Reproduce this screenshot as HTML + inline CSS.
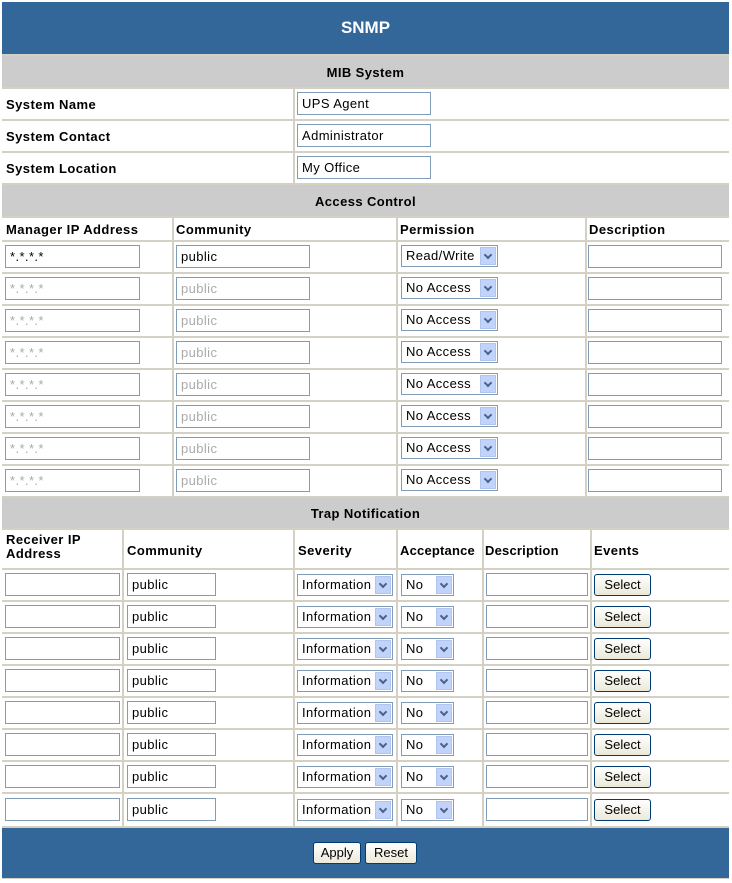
<!DOCTYPE html>
<html><head><meta charset="utf-8"><style>
*{margin:0;padding:0;box-sizing:border-box}
body{width:732px;height:883px;background:#fff;position:relative;font-family:"Liberation Sans",Arial,sans-serif;overflow:hidden}
#w{position:absolute;left:2px;top:2px;width:727px;height:877px;background:#d4d0c4}
.a{position:absolute}
.blue{background:#336699;color:#fff}
.gray{background:#cccccc;font-weight:bold;font-size:13px;letter-spacing:0.4px;text-align:center;color:#000}
.row{position:absolute;left:0;width:727px;background:#fff}
.v{position:absolute;width:2px;background:#d4d0c4}
.lb{position:absolute;font-weight:bold;font-size:13px;letter-spacing:0.45px;color:#000}
.in{position:absolute;height:23px;border:1px solid #7f9db9;background:#fff;font-size:13px;letter-spacing:0.4px;line-height:22px;padding-left:4px;color:#000;white-space:nowrap}
.g{color:#aaa}
.sel{position:absolute;height:22px;border:1px solid #7f9db9;background:#fff;font-size:13px;letter-spacing:0.4px;line-height:20px;padding-left:4px;white-space:nowrap}
.sel i{position:absolute;right:1px;top:1px;width:16px;height:18px;background:#c1d3fb;border:1px solid #b0c4f0}
.sel i:after{content:"";position:absolute;left:4px;top:4px;width:4px;height:4px;border-right:2px solid #4d6185;border-bottom:2px solid #4d6185;transform:rotate(45deg)}
.btn{position:absolute;height:22px;border:1px solid #003c74;border-radius:3px;background:linear-gradient(#fff,#ece9d8);font-size:13px;line-height:20px;text-align:center;color:#000}
</style></head><body>
<div id="w">
<div class="a blue" style="left:0;top:0;width:727px;height:52px;font-weight:bold;font-size:17px;line-height:52px;text-align:center">SNMP</div>
<div class="a gray" style="left:0;top:54px;width:727px;height:31px;line-height:33px">MIB System</div>

<div class="row" style="top:87px;height:30px"></div>
<div class="row" style="top:119px;height:30px"></div>
<div class="row" style="top:151px;height:30px"></div>
<div class="v" style="left:291px;top:87px;height:94px"></div>
<div class="lb" style="left:4px;top:95px">System Name</div>
<div class="lb" style="left:4px;top:127px">System Contact</div>
<div class="lb" style="left:4px;top:159px">System Location</div>
<div class="in" style="left:295px;top:90px;width:134px">UPS Agent</div>
<div class="in" style="left:295px;top:122px;width:134px">Administrator</div>
<div class="in" style="left:295px;top:154px;width:134px">My Office</div>

<div class="a gray" style="left:0;top:183px;width:727px;height:31px;line-height:33px">Access Control</div>
<div class="row" style="top:216px;height:22px"></div>
<div class="row" style="top:240px;height:30px"></div>
<div class="row" style="top:272px;height:30px"></div>
<div class="row" style="top:304px;height:30px"></div>
<div class="row" style="top:336px;height:30px"></div>
<div class="row" style="top:368px;height:30px"></div>
<div class="row" style="top:400px;height:30px"></div>
<div class="row" style="top:432px;height:30px"></div>
<div class="row" style="top:464px;height:30px"></div>
<div class="v" style="left:170px;top:216px;height:278px"></div>
<div class="v" style="left:394px;top:216px;height:278px"></div>
<div class="v" style="left:583px;top:216px;height:278px"></div>
<div class="lb" style="left:4px;top:220px">Manager IP Address</div>
<div class="lb" style="left:174px;top:220px">Community</div>
<div class="lb" style="left:398px;top:220px">Permission</div>
<div class="lb" style="left:587px;top:220px">Description</div>

<div class="in" style="left:3px;top:243px;width:135px">*.*.*.*</div><div class="in" style="left:174px;top:243px;width:134px">public</div><div class="sel" style="left:399px;top:243px;width:97px">Read/Write<i></i></div><div class="in" style="left:586px;top:243px;width:134px"></div>
<div class="in g" style="left:3px;top:275px;width:135px">*.*.*.*</div><div class="in g" style="left:174px;top:275px;width:134px">public</div><div class="sel" style="left:399px;top:275px;width:97px">No Access<i></i></div><div class="in" style="left:586px;top:275px;width:134px"></div>
<div class="in g" style="left:3px;top:307px;width:135px">*.*.*.*</div><div class="in g" style="left:174px;top:307px;width:134px">public</div><div class="sel" style="left:399px;top:307px;width:97px">No Access<i></i></div><div class="in" style="left:586px;top:307px;width:134px"></div>
<div class="in g" style="left:3px;top:339px;width:135px">*.*.*.*</div><div class="in g" style="left:174px;top:339px;width:134px">public</div><div class="sel" style="left:399px;top:339px;width:97px">No Access<i></i></div><div class="in" style="left:586px;top:339px;width:134px"></div>
<div class="in g" style="left:3px;top:371px;width:135px">*.*.*.*</div><div class="in g" style="left:174px;top:371px;width:134px">public</div><div class="sel" style="left:399px;top:371px;width:97px">No Access<i></i></div><div class="in" style="left:586px;top:371px;width:134px"></div>
<div class="in g" style="left:3px;top:403px;width:135px">*.*.*.*</div><div class="in g" style="left:174px;top:403px;width:134px">public</div><div class="sel" style="left:399px;top:403px;width:97px">No Access<i></i></div><div class="in" style="left:586px;top:403px;width:134px"></div>
<div class="in g" style="left:3px;top:435px;width:135px">*.*.*.*</div><div class="in g" style="left:174px;top:435px;width:134px">public</div><div class="sel" style="left:399px;top:435px;width:97px">No Access<i></i></div><div class="in" style="left:586px;top:435px;width:134px"></div>
<div class="in g" style="left:3px;top:467px;width:135px">*.*.*.*</div><div class="in g" style="left:174px;top:467px;width:134px">public</div><div class="sel" style="left:399px;top:467px;width:97px">No Access<i></i></div><div class="in" style="left:586px;top:467px;width:134px"></div>

<div class="a gray" style="left:0;top:496px;width:727px;height:30px;line-height:32px">Trap Notification</div>
<div class="row" style="top:528px;height:38px"></div>
<div class="row" style="top:568px;height:30px"></div>
<div class="row" style="top:600px;height:30px"></div>
<div class="row" style="top:632px;height:30px"></div>
<div class="row" style="top:664px;height:30px"></div>
<div class="row" style="top:696px;height:30px"></div>
<div class="row" style="top:728px;height:30px"></div>
<div class="row" style="top:760px;height:30px"></div>
<div class="row" style="top:792px;height:32px"></div>
<div class="v" style="left:120px;top:528px;height:296px"></div>
<div class="v" style="left:291px;top:528px;height:296px"></div>
<div class="v" style="left:394px;top:528px;height:296px"></div>
<div class="v" style="left:480px;top:528px;height:296px"></div>
<div class="v" style="left:588px;top:528px;height:296px"></div>
<div class="lb" style="left:4px;top:531px;line-height:14px">Receiver IP<br>Address</div>
<div class="lb" style="left:125px;top:541px">Community</div>
<div class="lb" style="left:296px;top:541px">Severity</div>
<div class="lb" style="left:398px;top:541px;letter-spacing:0.2px">Acceptance</div>
<div class="lb" style="left:483px;top:541px;letter-spacing:0.2px">Description</div>
<div class="lb" style="left:592px;top:541px">Events</div>

<div class="in" style="left:3px;top:571px;width:115px"></div><div class="in" style="left:125px;top:571px;width:89px">public</div><div class="sel" style="left:295px;top:572px;width:96px">Information<i></i></div><div class="sel" style="left:399px;top:572px;width:53px">No<i></i></div><div class="in" style="left:484px;top:571px;width:102px"></div><div class="btn" style="left:592px;top:572px;width:57px">Select</div>
<div class="in" style="left:3px;top:603px;width:115px"></div><div class="in" style="left:125px;top:603px;width:89px">public</div><div class="sel" style="left:295px;top:604px;width:96px">Information<i></i></div><div class="sel" style="left:399px;top:604px;width:53px">No<i></i></div><div class="in" style="left:484px;top:603px;width:102px"></div><div class="btn" style="left:592px;top:604px;width:57px">Select</div>
<div class="in" style="left:3px;top:635px;width:115px"></div><div class="in" style="left:125px;top:635px;width:89px">public</div><div class="sel" style="left:295px;top:636px;width:96px">Information<i></i></div><div class="sel" style="left:399px;top:636px;width:53px">No<i></i></div><div class="in" style="left:484px;top:635px;width:102px"></div><div class="btn" style="left:592px;top:636px;width:57px">Select</div>
<div class="in" style="left:3px;top:667px;width:115px"></div><div class="in" style="left:125px;top:667px;width:89px">public</div><div class="sel" style="left:295px;top:668px;width:96px">Information<i></i></div><div class="sel" style="left:399px;top:668px;width:53px">No<i></i></div><div class="in" style="left:484px;top:667px;width:102px"></div><div class="btn" style="left:592px;top:668px;width:57px">Select</div>
<div class="in" style="left:3px;top:699px;width:115px"></div><div class="in" style="left:125px;top:699px;width:89px">public</div><div class="sel" style="left:295px;top:700px;width:96px">Information<i></i></div><div class="sel" style="left:399px;top:700px;width:53px">No<i></i></div><div class="in" style="left:484px;top:699px;width:102px"></div><div class="btn" style="left:592px;top:700px;width:57px">Select</div>
<div class="in" style="left:3px;top:731px;width:115px"></div><div class="in" style="left:125px;top:731px;width:89px">public</div><div class="sel" style="left:295px;top:732px;width:96px">Information<i></i></div><div class="sel" style="left:399px;top:732px;width:53px">No<i></i></div><div class="in" style="left:484px;top:731px;width:102px"></div><div class="btn" style="left:592px;top:732px;width:57px">Select</div>
<div class="in" style="left:3px;top:763px;width:115px"></div><div class="in" style="left:125px;top:763px;width:89px">public</div><div class="sel" style="left:295px;top:764px;width:96px">Information<i></i></div><div class="sel" style="left:399px;top:764px;width:53px">No<i></i></div><div class="in" style="left:484px;top:763px;width:102px"></div><div class="btn" style="left:592px;top:764px;width:57px">Select</div>
<div class="in" style="left:3px;top:796px;width:115px"></div><div class="in" style="left:125px;top:796px;width:89px">public</div><div class="sel" style="left:295px;top:797px;width:96px">Information<i></i></div><div class="sel" style="left:399px;top:797px;width:53px">No<i></i></div><div class="in" style="left:484px;top:796px;width:102px"></div><div class="btn" style="left:592px;top:797px;width:57px">Select</div>

<div class="a blue" style="left:0;top:826px;width:727px;height:50px"></div>
<div class="btn" style="left:311px;top:840px;width:48px">Apply</div>
<div class="btn" style="left:363px;top:840px;width:52px">Reset</div>
</div>
</body></html>
